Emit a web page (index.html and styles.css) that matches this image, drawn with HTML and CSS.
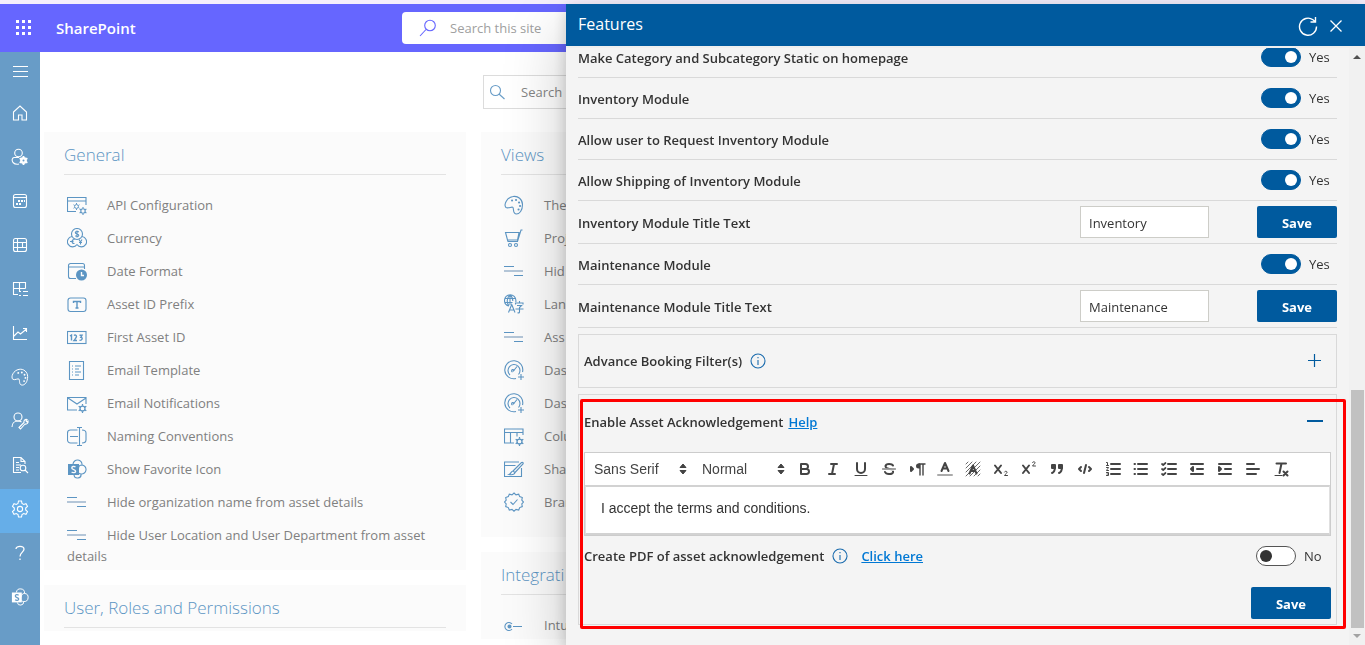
FILE: index.html
```html
<!DOCTYPE html>
<html lang="en">
<head>
<meta charset="utf-8">
<title>Features</title>
<link rel="stylesheet" href="styles.css">
</head>
<body>
<svg class="sprite" aria-hidden="true">
  <symbol id="i-lines" viewBox="0 0 20 20"><path d="M0 5.500h10M10 14.500h9"/><path d="M0 10h19" stroke="#b4c6d8" stroke-width="2"/></symbol>
  <symbol id="i-gauge" viewBox="0 0 20 20"><path d="M12 18.500A9 9 0 1 1 18.500 12M6 15a6 6 0 1 1 8.500-.5M9 11.500l4-5M8.500 12a1.200 1.200 0 1 1 1.500-1M14 17h6M17 14v6"/></symbol>
  <symbol id="i-palette" viewBox="0 0 20 20"><path d="M9 1.500c5-1 9.500 3 9.500 8 0 6-3 9.500-6 9.500-4 0-2.500-5-3.500-6.500S4.500 14 2 12.500C-.5 10 2.500 2.500 9 1.500z"/><path d="M8 5.500h.1M12 5h.1M15 7.500h.1M16 11h.1M14.500 14.500h.1" stroke-width="2" stroke-linecap="round"/></symbol>
  <symbol id="i-info" viewBox="0 0 16 16"><circle cx="8" cy="8" r="7"/><path d="M8 7v5M8 4v1.300"/></symbol>
  <symbol id="i-sp" viewBox="0 0 20 20"><path d="M6 5a4.500 4.500 0 1 1 9 1 4.500 4.500 0 1 1-1 9 3.500 3.500 0 0 1-7 1M15 6c-2 0-3.500 1.500-3.500 3.500M14 15c-1 0-2-.5-2.500-1"/><path d="M1 5h11v11H1z" fill="currentColor" stroke="none"/><path class="cut" d="M8.500 8C7 7 4.800 7.300 4.800 9c0 2 3.800 1.200 3.800 3.200 0 1.700-2.600 1.800-4 .8"/></symbol>
  <symbol id="i-gear" viewBox="0 0 8 8"><circle cx="4" cy="4" r="2.200"/><path d="M4 0v1.500M4 6.500V8M0.600 2l1.300.8M6.100 5.200l1.300.8M.6 6l1.300-.8M6.100 2.800L7.400 2"/></symbol>
  <symbol id="i-updown" viewBox="0 0 8 12"><path d="M1 4.500L4 1l3 3.500zM1 7.500L4 11l3-3.500z" fill="currentColor" stroke="currentColor" stroke-linejoin="round"/></symbol>
</svg>

<header class="suite">
  <div class="suite-brand">
    <button class="waffle" aria-label="App launcher"><svg width="18" height="18" viewBox="0 0 18 18"><g fill="#fff"><rect x="1" y="1" width="3" height="3"/><rect x="7" y="1" width="3" height="3"/><rect x="13" y="1" width="3" height="3"/><rect x="1" y="7" width="3" height="3"/><rect x="7" y="7" width="3" height="3"/><rect x="13" y="7" width="3" height="3"/><rect x="1" y="13" width="3" height="3"/><rect x="7" y="13" width="3" height="3"/><rect x="13" y="13" width="3" height="3"/></g></svg></button>
    <a class="brand" href="#">SharePoint</a>
  </div>
  <label class="suite-search">
    <svg class="ico" width="18" height="18" viewBox="0 0 18 18"><circle cx="11" cy="6.500" r="5.300"/><path d="M7 10.500L1 17"/></svg>
    <input type="search" placeholder="Search this site" aria-label="Search this site">
  </label>
</header>

<div class="shell">
  <nav class="rail" aria-label="Main">
    <a class="menu" href="#" aria-label="Menu"><svg class="ico" width="16" height="16" viewBox="0 0 16 16"><path d="M1 3.500h15M1 8.500h15M1 13.500h15"/></svg></a>
    <a href="#" aria-label="Home"><svg class="ico" width="16" height="16" viewBox="0 0 16 16"><path d="M1.500 7L8 1l6.500 6v8H10v-5H6.500v5h-5z"/></svg></a>
    <a href="#" aria-label="User settings"><svg class="ico" width="18" height="18" viewBox="0 0 18 18"><circle cx="7.500" cy="5" r="3.800"/><path d="M8 9.500H3C1 10 .5 12.500 2 14.500 3.500 16 6 16.500 8 16"/><circle cx="12.500" cy="12.500" r="2.200" stroke-width="2.400"/><path d="M12.500 8v2M12.500 15v2M8.600 10.200l1.800 1M14.600 13.800l1.800 1M8.600 14.800l1.800-1M14.600 11.200l1.800-1" stroke-width="1.800"/></svg></a>
    <a href="#" aria-label="Calendar"><svg class="ico" width="16" height="16" viewBox="0 0 16 16"><rect x="1.500" y="1.500" width="13" height="13" rx="2"/><path d="M1.500 4.500h13"/><path d="M6 8h2M9 8h2M12 8h1M4 11h2M7 11h2" stroke-width="2"/></svg></a>
    <a href="#" aria-label="Table"><svg class="ico" width="16" height="16" viewBox="0 0 16 16"><rect x="1.500" y="1.500" width="13" height="13" rx="2"/><path d="M1.500 5.500h13M1.500 10.500h13M5.500 1.500v13M10.500 5.500v5"/></svg></a>
    <a href="#" aria-label="Asset list"><svg class="ico" width="16" height="16" viewBox="0 0 16 16"><path d="M13.500 7.500v-6h-12v12H6M1.500 7.500h12M7.500 1.500v9M7 10.500h2M11 10.500h5M7 14.500h2M11 14.500h5"/></svg></a>
    <a href="#" aria-label="Reports"><svg class="ico" width="16" height="16" viewBox="0 0 16 16"><path d="M1.500 1v13.500H15M2 11l4-4 2.500 2L14.500 4M11 3.500h3.500V7"/></svg></a>
    <a href="#" aria-label="Theme"><svg class="ico" width="18" height="18"><use href="#i-palette"/></svg></a>
    <a href="#" aria-label="User edit"><svg class="ico" width="18" height="18" viewBox="0 0 18 18"><circle cx="7" cy="5" r="4"/><path d="M1 15c0-3.500 2.500-6 6-6 1.500 0 2.500.3 3.500 1M8 15.500l5-5c-.5-2 1-3.500 3-3l-1 1.500 1 1 1-1c.5 2-1 3.500-3 3l-4.500 5z"/></svg></a>
    <a href="#" aria-label="Audit"><svg class="ico" width="18" height="18" viewBox="0 0 18 18"><path d="M14 8V5.500L10 1.500H2.500v15H10M10 1.500v4h4M5 6.500h3M5 9h5M5 11.500h3M5 14h3"/><circle cx="12" cy="12" r="2.800"/><path d="M14 14l3 3"/></svg></a>
    <a class="active" href="#" aria-label="Settings"><svg class="ico" width="18" height="18" viewBox="0 0 18 18"><path d="M7.500 1h3l.5 2.500 1.700 1 2.300-.8 1.500 2.600L14.700 8v2l1.800 1.700-1.500 2.600-2.300-.8-1.700 1-.5 2.500h-3L7 14.500l-1.700-1-2.300.8-1.500-2.600L3.300 10V8L1.500 6.300 3 3.700l2.300.8 1.700-1z"/><circle cx="9" cy="9" r="2.600"/></svg></a>
    <a href="#" aria-label="Help"><svg class="ico" width="16" height="16" viewBox="0 0 16 16"><path d="M4 4C4 .5 12 .3 12 4.300 12 7 8 7.500 8 11.500M8 13.500V15" stroke-width="1.300"/></svg></a>
    <a href="#" aria-label="SharePoint site"><svg class="ico" width="18" height="18"><use href="#i-sp"/></svg></a>
  </nav>

  <main class="main">
    <label class="find">
      <svg class="ico" width="16" height="16" viewBox="0 0 16 16"><circle cx="6.500" cy="6.500" r="5"/><path d="M10 10l5.500 5"/></svg>
      <input type="search" placeholder="Search ..." aria-label="Search settings">
    </label>
    <div class="columns">
      <div class="column">
        <section class="card">
          <h2>General</h2>
          <ul>
            <li><svg class="ico" width="20" height="20" viewBox="0 0 20 20"><path d="M9 16.500H.5v-14h18.500V10M.5 6h18.500"/><use href="#i-gear" x="6" y="8" width="7" height="7"/><use href="#i-gear" x="12" y="12" width="8" height="8"/></svg><a href="#">API Configuration</a></li>
            <li><svg class="ico" width="20" height="20" viewBox="0 0 20 20"><circle cx="10" cy="6" r="5.500"/><path d="M5 8.500a5.200 5.200 0 1 0 5 8M15 8.500a5.200 5.200 0 1 1-5 8"/><path d="M11.800 4C10.500 3 8.300 3.300 8.300 4.700c0 1.600 3.500.9 3.500 2.600 0 1.400-2.200 1.500-3.500.5M10 2.500v7M7.500 11.500c-3-.5-3.500 4.500 0 4M3 13.500h3.500M12 11.500l1.500 2.500 1.500-2.500M13.500 14v2.500M12 14.500h3"/></svg><a href="#">Currency</a></li>
            <li><svg class="ico" width="20" height="20" viewBox="0 0 20 20"><path d="M9 17.500H3.500a2 2 0 0 1-2-2v-11a2 2 0 0 1 2-2h12a2 2 0 0 1 2 2V8M1.500 6h16"/><circle cx="14.500" cy="14" r="5.500" fill="currentColor" stroke="none"/><path class="cut" d="M14.500 11v3.500H17"/></svg><a href="#">Date Format</a></li>
            <li><svg class="ico" width="20" height="20" viewBox="0 0 20 20"><rect x="1" y="4" width="18" height="13.500" rx="2.500"/><path d="M6.500 9V7.500h7V9M10 7.500v6.500M8.500 14h3" stroke-width="1.400"/></svg><a href="#">Asset ID Prefix</a></li>
            <li><svg class="ico" width="20" height="20" viewBox="0 0 20 20"><rect x=".5" y="4.500" width="18.500" height="12"/><path d="M3 9l1.500-1v5.500M7 8.500c1-1 2.500-.5 2.500 1 0 1-1 2-2.500 4h3M12.500 8.300H15l-1.200 2c2.400.2 1.500 3.300-1.300 3" stroke-width="1.400"/></svg><a href="#">First Asset ID</a></li>
            <li><svg class="ico" width="20" height="20" viewBox="0 0 20 20"><path d="M2.500 1.500h14v18h-14zM5 6h1M8 6h6M5 9h1M8 9h4M5 12h1M8 12h6M5 15h1M8 15h4"/></svg><a href="#">Email Template</a></li>
            <li><svg class="ico" width="20" height="20" viewBox="0 0 20 20"><path d="M10 17H.5V4.500h18.500V11M1 5l9 6 9-6"/><use href="#i-gear" x="11" y="11" width="9" height="9"/></svg><a href="#">Email Notifications</a></li>
            <li><svg class="ico" width="20" height="20" viewBox="0 0 20 20"><path d="M10.500 4H3.500a3 3 0 0 0-3 3v7a3 3 0 0 0 3 3h7M15 4c2.500 0 4 1 4 3v7c0 2-1.500 3-4 3M12.500 1.500v18M10 1.500h5M10 19.500h5M3 10.500h8"/></svg><a href="#">Naming Conventions</a></li>
            <li><svg class="ico" width="20" height="20"><use href="#i-sp"/></svg><a href="#">Show Favorite Icon</a></li>
            <li><svg class="ico" width="20" height="20"><use href="#i-lines"/></svg><a href="#">Hide organization name from asset details</a></li>
            <li><svg class="ico" width="20" height="20"><use href="#i-lines"/></svg><a href="#">Hide User Location and User Department from asset details</a></li>
          </ul>
        </section>
        <section class="card">
          <h2>User, Roles and Permissions</h2>
        </section>
      </div>
      <div class="column">
        <section class="card tall">
          <h2>Views</h2>
          <ul>
            <li><svg class="ico" width="20" height="20"><use href="#i-palette"/></svg><a href="#">The</a></li>
            <li><svg class="ico" width="20" height="20" viewBox="0 0 20 20"><path d="M1.500 4.500h13.500L13.500 12h-10zM3.500 12l.5 1.500h9.500L17 2h1.500"/><circle cx="6" cy="17" r="1.500"/><circle cx="12" cy="17" r="1.500"/></svg><a href="#">Proj</a></li>
            <li><svg class="ico" width="20" height="20"><use href="#i-lines"/></svg><a href="#">Hid</a></li>
            <li><svg class="ico" width="20" height="20" viewBox="0 0 20 20"><path d="M5 12C2.500 11.500.5 9.500.5 6.500a5.700 5.700 0 0 1 11.400 0V8M.5 4.500h11M.5 8.500h8M6 1v10M6 1C2.500 4 2.500 9 5 12M6 1c2 1.500 2.800 3.500 2.800 6M4.500 18.500L7.700 10.500 11 18.500M5.500 16h4.500M15.500 7v1.500M11.500 10.500V9H19v1.500M13 11.500h4.500l-2 2V18c0 1-1 1-2 .8M11.500 15H19.500"/></svg><a href="#">Lan</a></li>
            <li><svg class="ico" width="20" height="20"><use href="#i-lines"/></svg><a href="#">Ass</a></li>
            <li><svg class="ico" width="20" height="20"><use href="#i-gauge"/></svg><a href="#">Das</a></li>
            <li><svg class="ico" width="20" height="20"><use href="#i-gauge"/></svg><a href="#">Das</a></li>
            <li><svg class="ico" width="20" height="20" viewBox="0 0 20 20"><path d="M10 17H.5V3h18.500v6M.5 6.500h18.500M6.500 6.500V17M13 6.500v4"/><use href="#i-gear" x="11" y="11" width="9" height="9"/></svg><a href="#">Colu</a></li>
            <li><svg class="ico" width="20" height="20" viewBox="0 0 20 20"><path d="M15 3H.5v14.500H17.500V9M.5 6.500h11M9 12l8.500-8.500c1.500-.5 2 .5 1.500 1.500L11 13.500M9 12c-2 0-1.500 2.500-4 3.500 3 .5 5.500.5 6-2z"/></svg><a href="#">Sha</a></li>
            <li><svg class="ico" width="20" height="20" viewBox="0 0 20 20"><path d="M10 1l2 1.800 2.700-.6 1 2.400 2.600 1-.5 2.600L19.500 10l-1.700 2 .5 2.600-2.600 1-1 2.400-2.700-.6L10 19.200l-2-1.800-2.700.6-1-2.400-2.600-1 .5-2.600L.5 10l1.700-1.800-.5-2.600 2.600-1 1-2.400 2.700.6zM6.500 10l2.500 2.500 4.500-5"/></svg><a href="#">Bran</a></li>
          </ul>
        </section>
        <section class="card">
          <h2>Integrati</h2>
          <ul>
            <li><svg class="ico" width="20" height="20" viewBox="0 0 20 20"><path d="M8 9a4 4 0 1 0 0 5M9 11.500h9"/><circle cx="5.500" cy="11.500" r="1.500" fill="currentColor"/></svg><a href="#">Intu</a></li>
          </ul>
        </section>
      </div>
    </div>
  </main>
</div>

<aside class="panel" aria-label="Features">
  <header class="panel-head">
    <h1>Features</h1>
    <button aria-label="Refresh"><svg class="ico" width="20" height="20" viewBox="0 0 20 20"><path d="M18.500 10.500A8.500 8.500 0 1 1 15 3.800L17.500 6M17.500 1v5h-5" stroke-width="1.400"/></svg></button>
    <button aria-label="Close"><svg class="ico" width="14" height="14" viewBox="0 0 14 14"><path d="M1.500 1.500l11 11M12.500 1.500l-11 11" stroke-width="1.300"/></svg></button>
  </header>
  <div class="panel-body">
    <div class="features">
      <div class="row"><span class="name">Make Category and Subcategory Static on homepage</span><label class="switch"><input type="checkbox" checked><span>Yes</span></label></div>
      <div class="row"><span class="name">Inventory Module</span><label class="switch"><input type="checkbox" checked><span>Yes</span></label></div>
      <div class="row"><span class="name">Allow user to Request Inventory Module</span><label class="switch"><input type="checkbox" checked><span>Yes</span></label></div>
      <div class="row"><span class="name">Allow Shipping of Inventory Module</span><label class="switch"><input type="checkbox" checked><span>Yes</span></label></div>
      <div class="row field"><label class="name" for="inv">Inventory Module Title Text</label><input id="inv" type="text" value="Inventory"><button class="save">Save</button></div>
      <div class="row"><span class="name">Maintenance Module</span><label class="switch"><input type="checkbox" checked><span>Yes</span></label></div>
      <div class="row field"><label class="name" for="mnt">Maintenance Module Title Text</label><input id="mnt" type="text" value="Maintenance"><button class="save">Save</button></div>

      <section class="fold">
        <h3>Advance Booking Filter(s)</h3>
        <svg class="ico info" width="16" height="16"><use href="#i-info"/></svg>
        <button class="toggle" aria-label="Expand"><svg class="ico" width="16" height="16" viewBox="0 0 16 16"><path d="M1 7.500h13M7.500 1v13" stroke-width="1.200"/></svg></button>
      </section>

      <section class="ack">
        <div class="ack-head">
          <h3>Enable Asset Acknowledgement</h3>
          <a href="#">Help</a>
          <button class="toggle" aria-label="Collapse"><svg class="ico" width="16" height="16" viewBox="0 0 16 16"><path d="M0 7h16" stroke-width="2"/></svg></button>
        </div>
        <div class="editor">
          <div class="toolbar">
            <label class="pick font"><select aria-label="Font"><option>Sans Serif</option></select><svg width="8" height="12"><use href="#i-updown"/></svg></label>
            <label class="pick"><select aria-label="Size"><option>Normal</option></select><svg width="8" height="12"><use href="#i-updown"/></svg></label>
            <button aria-label="Bold"><svg viewBox="0 0 18 18"><path d="M5 4h4.500a2.500 2.500 0 0 1 0 5H5zM5 9h5.500a2.500 2.500 0 0 1 0 5H5z"/></svg></button>
            <button aria-label="Italic"><svg viewBox="0 0 18 18"><path d="M7 4h6M5 14h6M8 14l2-10"/></svg></button>
            <button aria-label="Underline"><svg viewBox="0 0 18 18"><path d="M5 3v6a4 4 0 0 0 8 0V3"/><path d="M3 15.500h12" stroke-width="1"/></svg></button>
            <button aria-label="Strike"><svg viewBox="0 0 18 18"><path d="M13 5.500C12 3.500 6 3 5.500 6c-.3 2 2 2.500 4 3 3 .7 4 1.500 3.500 3.300C12 15 6 14.500 5 12"/><path d="M2.500 9.500h13" stroke="#fff" stroke-width="2.500"/><path d="M2.500 9h13" stroke-width="1"/></svg></button>
            <button aria-label="Direction"><svg viewBox="0 0 18 18"><path d="M3 7v4l2-2z" fill="#444"/><path d="M12 4v11M15 4v11M11 4h6" stroke-width="1.400"/><path d="M12 3.500h-1.500a2.500 2.500 0 0 0 0 5H12z" fill="#444" stroke="none"/></svg></button>
            <button aria-label="Color"><svg viewBox="0 0 18 18"><path d="M2 15h14" stroke="#aaa"/><path d="M5.500 11L9 3l3.500 8M6.800 8.500h4.400"/></svg></button>
            <button aria-label="Background"><svg viewBox="0 0 18 18"><path d="M2 4l2-2M2 8l6-6M2 12L12 2M2 16L16 2M6 16L16 6M10 16l6-6M14 16l2-2" stroke-width=".8"/><path d="M5.500 13.500L9 5.500l3.500 8M6.800 11h4.400"/></svg></button>
            <button aria-label="Subscript"><svg viewBox="0 0 18 18"><path d="M3 5.500l6 7.500M9 5.500L3 13"/><path d="M12.500 12c.5-1.200 2.800-1 2.500.5-.2.900-2 1.800-2.500 3h3" stroke-width="1"/></svg></button>
            <button aria-label="Superscript"><svg viewBox="0 0 18 18"><path d="M3 5.500l6 7.500M9 5.500L3 13"/><path d="M12.500 2.500c.5-1.200 2.800-1 2.500.5-.2.900-2 1.800-2.500 3h3" stroke-width="1"/></svg></button>
            <button aria-label="Quote"><svg viewBox="0 0 18 18"><path d="M4 5h3v3H4zM11 5h3v3h-3z" fill="#444"/><path d="M7 7c0 3-.5 5-3 6M14 7c0 3-.5 5-3 6"/></svg></button>
            <button aria-label="Code"><svg viewBox="0 0 18 18"><path d="M5 7L3 9l2 2M13 7l2 2-2 2M10 5L8 13"/></svg></button>
            <button aria-label="Ordered list"><svg viewBox="0 0 18 18"><path d="M7 4h9M7 9h9M7 14h9"/><path d="M2.500 2.500h1v3M2.500 5.500h2M2.500 7.500h2c0 1.500-2 1.500-2 3h2M2.500 12.500h2v3h-2M3 14h1.500" stroke-width="1"/></svg></button>
            <button aria-label="Bullet list"><svg viewBox="0 0 18 18"><path d="M6 4h9M6 9h9M6 14h9M2.500 4h.5M2.500 9h.5M2.500 14h.5"/></svg></button>
            <button aria-label="Check list"><svg viewBox="0 0 18 18"><path d="M8 4h8M8 9h8M8 14h8"/><path d="M2 4l1.200 1L5.500 3M2 9l1.200 1L5.500 8M2 14l1.200 1 2.300-2" stroke-width="1.700"/></svg></button>
            <button aria-label="Outdent"><svg viewBox="0 0 18 18"><path d="M3 4h12M3 14h12M9 9h6"/><path d="M5 7v4L3 9z" fill="#444"/></svg></button>
            <button aria-label="Indent"><svg viewBox="0 0 18 18"><path d="M3 4h12M3 14h12M9 9h6"/><path d="M3 7v4l2-2z" fill="#444"/></svg></button>
            <button aria-label="Align"><svg viewBox="0 0 18 18"><path d="M3 4h7M3 9h12M3 14h9"/></svg></button>
            <button aria-label="Clear format"><svg viewBox="0 0 18 18"><path d="M4.500 3.500H14M9.500 3.500L7.500 13"/><path d="M3 15.500h7" stroke-width="1"/><path d="M11.500 11.500l4 4M15.500 11.500l-4 4"/></svg></button>
          </div>
          <textarea rows="1" aria-label="Acknowledgement text">I accept the terms and conditions.</textarea>
        </div>
        <div class="pdf">
          <span>Create PDF of asset acknowledgement</span>
          <svg class="ico info" width="16" height="16"><use href="#i-info"/></svg>
          <a href="#">Click here</a>
          <label class="switch"><input type="checkbox"><span>No</span></label>
        </div>
        <div class="ack-foot"><button class="save">Save</button></div>
        <div class="marker"></div>
      </section>
    </div>
    <div class="scroll" aria-hidden="true">
      <svg width="16" height="17"><path d="M4 11l4-4 4 4z" fill="#505050"/></svg>
      <div class="thumb"></div>
      <svg width="16" height="17"><path d="M4 6l4 4 4-4z" fill="#a3a3a3"/></svg>
    </div>
  </div>
</aside>
</body>
</html>
```
FILE: styles.css
```css
* { box-sizing: border-box; }
html, body { height: 100%; }
body {
  margin: 0;
  display: flex;
  flex-direction: column;
  overflow: hidden;
  border-top: 4px solid #f5effc;
  background: #fff;
  color: #333;
  font: 13px/20px "Open Sans", "Noto Sans", sans-serif;
}
h1, h2, h3, ul { margin: 0; padding: 0; font-weight: 400; }
button { border: 0; padding: 0; background: none; color: inherit; font: inherit; display: flex; align-items: center; justify-content: center; }
input, textarea, select { font: inherit; color: inherit; }
.sprite { position: absolute; width: 0; height: 0; }
.ico { fill: none; stroke: currentColor; stroke-width: 1.1; flex: none; }
.cut { stroke: var(--surface); stroke-width: 1.4; }

.suite { flex: none; height: 48px; display: grid; grid-template-columns: 1fr minmax(0, 561px) 1fr; align-items: center; background: #66f; }
.suite-brand { display: flex; align-items: center; color: #fff; }
.waffle { width: 48px; height: 48px; }
.brand { margin-left: 8px; color: #fff; font-size: 15px; font-weight: 600; text-decoration: none; }
.suite-search { height: 32px; display: flex; align-items: center; gap: 13px; padding-left: 17px; border-radius: 4px; background: #fff; color: #66f; }
.suite-search input, .find input { flex: 1; min-width: 0; border: 0; outline: 0; padding: 0; background: none; font-size: 13px; }
.suite-search input::placeholder { color: #a0a0a0; }

.shell { flex: 1; display: flex; min-height: 0; }
.rail { --surface: #689cc7; flex: none; width: 40px; background: var(--surface); }
.rail a { height: 44px; padding-bottom: 4px; display: flex; align-items: center; justify-content: center; color: #fff; }
.rail .menu { height: 41px; }
.rail .active { background: #66aee8; }

.main { flex: 1; min-width: 0; padding: 23px 25px 0 4px; }
.find { width: 418px; height: 34px; margin: 0 auto 23px; display: flex; align-items: center; gap: 16px; padding-left: 5px; border: 1px solid #dcdcdc; color: #689cc7; }
.find input::placeholder { color: #858585; }
.columns { display: grid; grid-template-columns: repeat(3, 1fr); gap: 15px; }
.column { display: flex; flex-direction: column; gap: 15px; }
.card { --surface: #fbfbfb; padding: 10px 20px 3px; background: var(--surface); }
.card.tall { padding-bottom: 24px; }
.card h2 { height: 33px; border-bottom: 1px solid #e3e3e3; color: #5c95c3; font-size: 17px; line-height: 25px; font-weight: 300; }
.card ul { list-style: none; padding: 20px 3px 0; }
.card li { margin-bottom: 12px; line-height: 21px; color: #5c95c3; }
.card li:last-child { margin-bottom: 0; }
.card li .ico { margin: -4px 20px -1px 0; vertical-align: middle; }
.card li a { color: #808080; text-decoration: none; }

.panel { position: fixed; top: 4px; right: 0; bottom: 0; width: 799px; display: flex; flex-direction: column; background: #f4f4f4; box-shadow: 0 26px 58px rgba(0, 0, 0, .22), 0 5px 14px rgba(0, 0, 0, .18); }
.panel-head { flex: none; height: 42px; display: flex; align-items: center; gap: 11px; padding: 0 22px 0 12px; background: #005a9e; color: #fff; }
.panel-head h1 { flex: 1; padding-bottom: 2px; font-size: 16px; }
.panel-head button { padding-top: 2px; }
.panel-body { flex: 1; min-height: 0; display: flex; overflow: hidden; border-top: 2px solid #efefef; }
.features { flex: 1; min-width: 0; margin-top: -11px; padding: 0 12px; }
.row { height: 41px; display: flex; align-items: center; border-bottom: 1px solid #d9d9d9; }
.row .name { flex: 1; padding-top: 2px; }
.name, .features h3 { font-size: 13px; font-weight: 600; }
.field { height: 43px; gap: 48px; }
.field input { width: 129px; height: 32px; padding: 2px 8px 0; border: 1px solid #cdcdc8; background: #fff; }
.save { width: 80px; height: 32px; padding-top: 1px; border-radius: 2px; background: #005a9e; color: #fff; font-weight: 700; }
.switch { display: flex; align-items: center; gap: 8px; }
.switch span { width: 28px; }
.switch input { appearance: none; width: 40px; height: 20px; margin: 0; display: flex; align-items: center; padding: 0 3px; border: 1px solid #555; border-radius: 10px; background: #fff; }
.switch input::before { content: ""; width: 12px; height: 12px; border-radius: 50%; background: #333; }
.switch input:checked { justify-content: flex-end; border-color: #005a9e; background: #005a9e; }
.switch input:checked::before { background: #fff; }

.info { color: #1b6cae; margin-left: 8px; }
.toggle { margin-left: auto; color: #005a9e; }
.fold { height: 54px; margin-top: 6px; padding: 0 13px 0 5px; display: flex; align-items: center; border: 1px solid #d9d9d9; }
.ack { position: relative; margin-top: 6px; padding: 0 5px 5px; border: 1px solid #d9d9d9; }
.ack a { color: #0078d4; font-weight: 600; }
.ack-head { height: 57px; padding: 0 8px 4px 0; display: flex; align-items: center; gap: 5px; }
.editor { border: 1px solid #ccc; background: #fff; font-family: "Liberation Sans", Arial, sans-serif; font-size: 14px; }
.toolbar { display: flex; align-items: center; height: 32px; padding: 0 8px; color: #444; }
.toolbar button { width: 28px; height: 24px; }
.toolbar button svg { width: 18px; height: 18px; fill: none; stroke: #444; stroke-width: 2; stroke-linecap: round; stroke-linejoin: round; }
.pick { width: 90px; display: flex; align-items: center; padding: 0 6px 0 1px; }
.pick.font { width: 108px; padding-right: 14px; }
.pick select { flex: 1; min-width: 0; appearance: none; border: 0; padding: 0; background: none; outline: 0; }
.editor textarea { display: block; width: 100%; height: 50px; padding: 12px 15px; border: 1px solid #ccc; border-width: 2px 1px; border-color: #d2d2d2 #e0e0e0; outline: 0; resize: none; line-height: 18px; }
.pdf { height: 40px; display: flex; align-items: center; font-weight: 600; }
.pdf a { margin-left: 13px; }
.pdf .switch { margin-left: auto; font-weight: 400; }
.pdf .switch span { width: 27px; }
.ack-foot { display: flex; justify-content: flex-end; padding-top: 11px; }
.marker { position: absolute; inset: 4px -10px -5px 1px; border: 3px solid #f00; border-radius: 2px; pointer-events: none; }

.scroll { flex: none; width: 16px; display: flex; flex-direction: column; background: #f1f1f1; }
.thumb { height: 238px; margin: auto 1px 0 2px; background: #c1c1c1; }
```
